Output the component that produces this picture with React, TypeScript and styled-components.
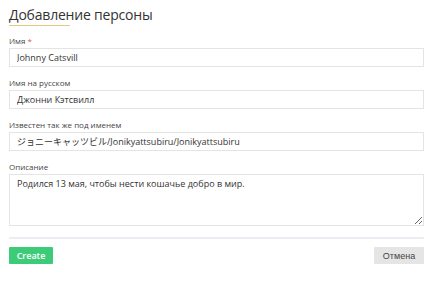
import React from 'react';
import styled, { createGlobalStyle } from 'styled-components';

const GlobalStyle = createGlobalStyle`
  html, body {
    margin: 0;
    padding: 0;
    background: #ffffff;
  }
  body {
    font-family: "Open Sans", "Noto Sans CJK JP", sans-serif;
    color: #333333;
  }
  * {
    box-sizing: border-box;
  }
`;

const Fields = [
  { label: 'Имя', required: true, value: 'Johnny Catsvill' },
  { label: 'Имя на русском', value: 'Джонни Кэтсвилл' },
  { label: 'Известен так же под именем', value: 'ジョニーキャッツビル/Jonikyattsubiru/Jonikyattsubiru' },
];

export default function App() {
  return (
    <>
      <GlobalStyle />
      <Page>
        <Title>Добавление персоны</Title>
        {Fields.map((f) => (
          <Field key={f.label}>
            <Label>
              {f.label}
              {f.required && <Star> *</Star>}
            </Label>
            <Input defaultValue={f.value} />
          </Field>
        ))}
        <Field>
          <Label>Описание</Label>
          <TextArea defaultValue="Родился 13 мая, чтобы нести кошачье добро в мир." />
        </Field>
        <Divider />
        <Actions>
          <CreateButton>Create</CreateButton>
          <CancelButton>Отмена</CancelButton>
        </Actions>
      </Page>
    </>
  );
}

const Page = styled.div`
  width: 445px;
  padding: 6px 21px 0 9px;
`;

const Title = styled.h1`
  position: relative;
  margin: 0 0 10px;
  padding-bottom: 2px;
  font-size: 14px;
  font-weight: 400;
  line-height: 18px;
  letter-spacing: -0.2px;
  color: #333333;
  &::after {
    content: '';
    position: absolute;
    left: 0;
    bottom: 0;
    width: 61px;
    height: 1px;
    background: #e6c77c;
  }
`;

const Field = styled.div`
  display: flex;
  flex-direction: column;
  margin-bottom: 11px;
`;

const Label = styled.label`
  font-size: 8px;
  line-height: 10px;
  color: #444444;
  margin-bottom: 2px;
`;

const Star = styled.span`
  color: #e0554f;
`;

const Input = styled.input`
  height: 19px;
  width: 100%;
  padding: 0 7px;
  border: 1px solid #e4e4e4;
  border-radius: 0;
  background: #ffffff;
  font-family: "Open Sans", "Noto Sans CJK JP", sans-serif;
  font-size: 9px;
  color: #333333;
  outline: none;
`;

const TextArea = styled.textarea`
  display: block;
  height: 52px;
  width: 100%;
  padding: 3px 7px;
  border: 1px solid #e4e4e4;
  border-radius: 0;
  resize: vertical;
  font-family: "Open Sans", sans-serif;
  font-size: 9px;
  line-height: 11px;
  color: #333333;
  outline: none;
`;

const Divider = styled.div`
  height: 2px;
  background: #ececf3;
  margin: 0 0 8px;
`;

const Actions = styled.div`
  display: flex;
  justify-content: space-between;
  align-items: center;
`;

const CreateButton = styled.button`
  width: 44px;
  height: 17px;
  padding: 0;
  border: none;
  border-radius: 1px;
  background: #3ccc78;
  color: #ffffff;
  font-family: "Open Sans", sans-serif;
  font-size: 9px;
  font-weight: 600;
`;

const CancelButton = styled.button`
  width: 50px;
  height: 17px;
  padding: 0;
  border: none;
  border-radius: 1px;
  background: #e5e5e5;
  color: #444444;
  font-family: "Liberation Sans", Arial, sans-serif;
  font-size: 9px;
`;
